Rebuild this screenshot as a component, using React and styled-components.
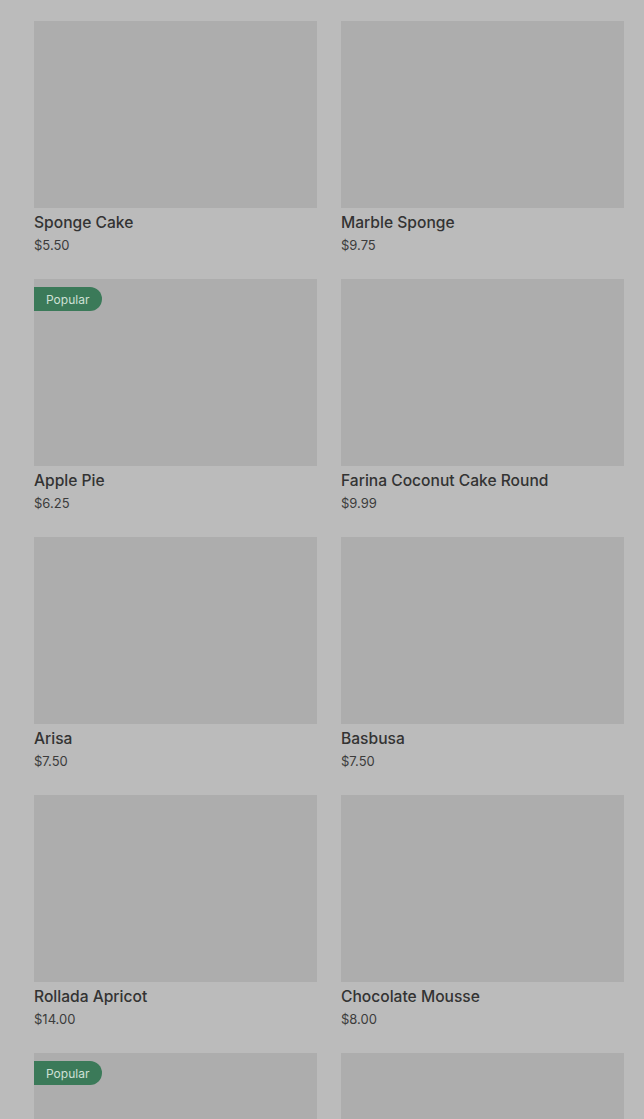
import styled, { createGlobalStyle } from "styled-components";

const Global = createGlobalStyle`
  html, body {
    margin: 0;
    padding: 0;
    background: #bbbbbb;
    font-family: Inter, "Noto Sans", sans-serif;
  }
`;

const Page = styled.div`
  padding: 21px 20px 24px 34px;
`;

const Grid = styled.div`
  display: grid;
  grid-template-columns: 283px 283px;
  column-gap: 24px;
  row-gap: 24px;
`;

const Card = styled.div`
  display: flex;
  flex-direction: column;
`;

const Thumb = styled.div`
  position: relative;
  height: 187px;
  background: #adadad;
`;

const Badge = styled.span`
  position: absolute;
  top: 8px;
  left: 0;
  height: 24px;
  padding: 0 13px 0 12px;
  display: flex;
  align-items: center;
  background: #3b7a59;
  color: #cfe0d6;
  font-size: 12px;
  border-radius: 0 12px 12px 0;
`;

const Title = styled.div`
  margin-top: 3px;
  font-size: 15.6px;
  line-height: 24px;
  font-weight: 500;
  color: #333333;
`;

const Price = styled.div`
  font-size: 13px;
  line-height: 20px;
  color: #3c3c3c;
`;

const items = [
  { name: "Sponge Cake", price: "$5.50" },
  { name: "Marble Sponge", price: "$9.75" },
  { name: "Apple Pie", price: "$6.25", popular: true },
  { name: "Farina Coconut Cake Round", price: "$9.99" },
  { name: "Arisa", price: "$7.50" },
  { name: "Basbusa", price: "$7.50" },
  { name: "Rollada Apricot", price: "$14.00" },
  { name: "Chocolate Mousse", price: "$8.00" },
  { name: "Lemon Tart", price: "$6.50", popular: true },
  { name: "Carrot Cake", price: "$8.25" },
];

function App() {
  return (
    <Page>
      <Global />
      <Grid>
        {items.map((item) => (
          <Card key={item.name}>
            <Thumb>{item.popular && <Badge>Popular</Badge>}</Thumb>
            <Title>{item.name}</Title>
            <Price>{item.price}</Price>
          </Card>
        ))}
      </Grid>
    </Page>
  );
}

export default App;
